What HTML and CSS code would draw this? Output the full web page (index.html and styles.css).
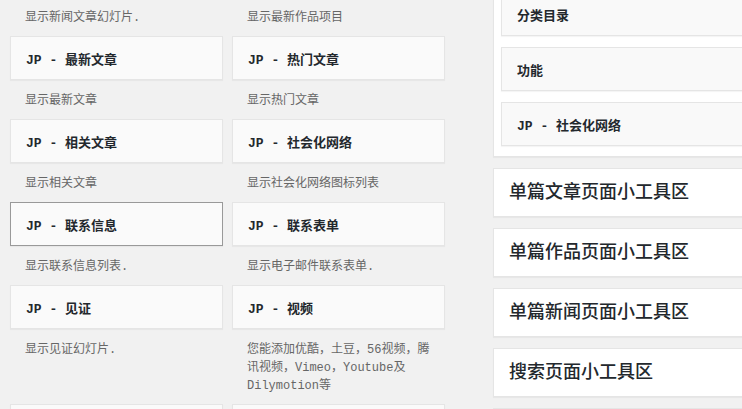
FILE: index.html
```html
<!doctype html>
<html lang="zh-CN">
  <head>
    <meta charset="UTF-8" />
    <meta name="viewport" content="width=device-width, initial-scale=1.0" />
    <title>小工具</title>
    <link rel="stylesheet" href="styles.css">
  </head>
  <body>
    <div class="widgets-wrap">
      <!-- 可用小工具 -->
      <div class="available">
        <div class="widget-list">
          <div class="widget">
            <p class="widget-description">显示新闻文章幻灯片.</p>
          </div>
          <div class="widget">
            <p class="widget-description">显示最新作品项目</p>
          </div>

          <div class="widget">
            <div class="widget-top"><h3 class="widget-title">JP - 最新文章</h3></div>
            <p class="widget-description">显示最新文章</p>
          </div>
          <div class="widget">
            <div class="widget-top"><h3 class="widget-title">JP - 热门文章</h3></div>
            <p class="widget-description">显示热门文章</p>
          </div>

          <div class="widget">
            <div class="widget-top"><h3 class="widget-title">JP - 相关文章</h3></div>
            <p class="widget-description">显示相关文章</p>
          </div>
          <div class="widget">
            <div class="widget-top"><h3 class="widget-title">JP - 社会化网络</h3></div>
            <p class="widget-description">显示社会化网络图标列表</p>
          </div>

          <div class="widget">
            <div class="widget-top hover"><h3 class="widget-title">JP - 联系信息</h3></div>
            <p class="widget-description">显示联系信息列表.</p>
          </div>
          <div class="widget">
            <div class="widget-top"><h3 class="widget-title">JP - 联系表单</h3></div>
            <p class="widget-description">显示电子邮件联系表单.</p>
          </div>

          <div class="widget">
            <div class="widget-top"><h3 class="widget-title">JP - 见证</h3></div>
            <p class="widget-description">显示见证幻灯片.</p>
          </div>
          <div class="widget">
            <div class="widget-top"><h3 class="widget-title">JP - 视频</h3></div>
            <p class="widget-description">您能添加优酷，土豆，56视频，腾讯视频，Vimeo，Youtube及Dilymotion等</p>
          </div>

          <div class="widget">
            <div class="widget-top"></div>
          </div>
          <div class="widget">
            <div class="widget-top"></div>
          </div>
        </div>
      </div>

      <!-- 侧边栏 -->
      <div class="sidebars">
        <div class="sidebar sidebar-open">
          <div class="widget-top"><h3 class="widget-title">分类目录</h3></div>
          <div class="widget-top"><h3 class="widget-title">功能</h3></div>
          <div class="widget-top"><h3 class="widget-title">JP - 社会化网络</h3></div>
        </div>
        <div class="sidebar"><h2 class="sidebar-name">单篇文章页面小工具区</h2></div>
        <div class="sidebar"><h2 class="sidebar-name">单篇作品页面小工具区</h2></div>
        <div class="sidebar"><h2 class="sidebar-name">单篇新闻页面小工具区</h2></div>
        <div class="sidebar"><h2 class="sidebar-name">搜索页面小工具区</h2></div>
        <div class="sidebar"><h2 class="sidebar-name"></h2></div>
      </div>
    </div>
  </body>
</html>
```

FILE: styles.css
```css
* {
  margin: 0;
  padding: 0;
  box-sizing: border-box;
}

body {
  font-family: "Liberation Mono", "Noto Sans CJK SC", monospace;
  background: #f1f1f1;
  color: #23282d;
  overflow: hidden;
}

.widgets-wrap {
  display: flex;
  align-items: flex-start;
}

/* 可用小工具 */
.available {
  padding-left: 10px;
  width: 445px;
  flex-shrink: 0;
}

.widget-list {
  display: grid;
  grid-template-columns: 213px 213px;
  column-gap: 9px;
  align-items: start;
  margin-top: -3px;
}

.widget-top {
  height: 44px;
  background: #fafafa;
  border: 1px solid #e5e5e5;
  box-shadow: 0 1px 1px rgba(0, 0, 0, 0.04);
  padding: 0 15px;
  display: flex;
  align-items: center;
}

.widget-top.hover {
  border-color: #999;
}

.widget-title {
  font-size: 13px;
  font-weight: 700;
  color: #23282d;
  white-space: nowrap;
}

.widget-description {
  padding: 12px 15px 9px;
  font-size: 12px;
  line-height: 18px;
  color: #666;
}

/* 侧边栏 */
.sidebars {
  margin-left: 48px;
  width: 300px;
  flex-shrink: 0;
}

.sidebar {
  background: #fff;
  border: 1px solid #e5e5e5;
  box-shadow: 0 1px 1px rgba(0, 0, 0, 0.04);
  margin-bottom: 11px;
}

.sidebar-open {
  margin-top: -9px;
  padding: 0 7px 10px;
}

.sidebar-open .widget-top {
  background: #f9f9f9;
  margin-bottom: 11px;
}

.sidebar-open .widget-top:last-child {
  margin-bottom: 0;
}

.sidebar-name {
  height: 47px;
  padding: 0 15px;
  font-size: 18px;
  font-weight: 500;
  line-height: 48px;
  color: #23282d;
}
```
